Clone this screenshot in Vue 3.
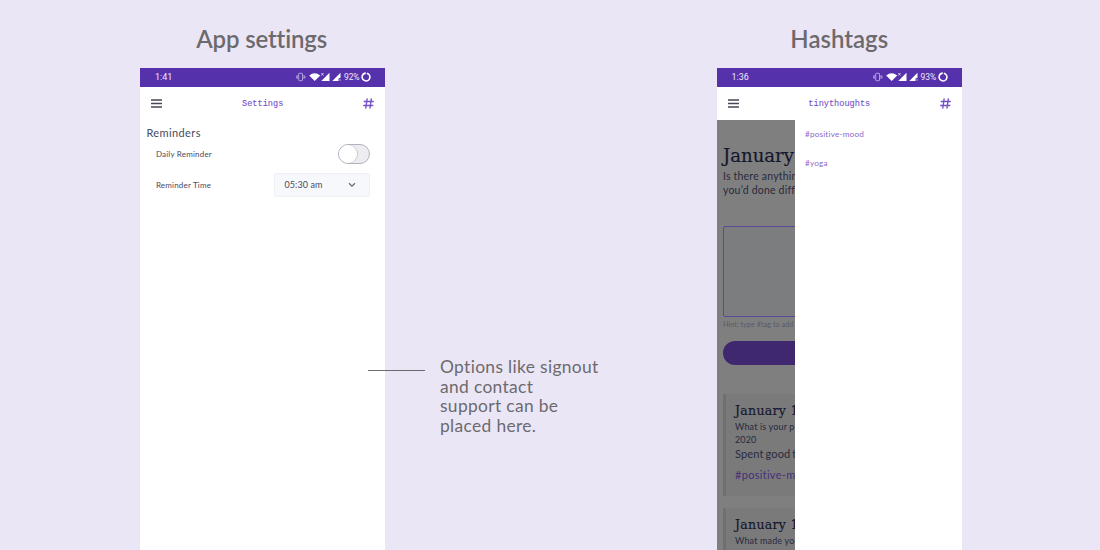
<script setup>
const phones = [
  { id: 'settings', heading: 'App settings', time: '1:41', battery: '92%', title: 'Settings' },
  { id: 'hashtags', heading: 'Hashtags', time: '1:36', battery: '93%', title: 'tinythoughts' },
]
</script>

<template>
  <main class="board">
    <section v-for="p in phones" :key="p.id" class="column" :class="p.id">
      <h1><span>{{ p.heading }}</span></h1>
      <div class="phone">
        <div class="status">
          <span class="clock">{{ p.time }}</span>
          <svg class="signals" width="46" height="10" viewBox="0 0 46 10">
            <g fill="none" stroke="#c9bcec" stroke-width=".8">
              <rect x="2.7" y="1.3" width="3.8" height="7.4" rx=".6" />
              <path d="M1.2 3v4M8 3v4M.2 4v2M9 4v2" />
            </g>
            <path fill="#fff" d="M13.200 3.400Q18.700-1 24.200 3.400L18.700 9Z" />
            <path fill="#fff" d="M33.500.8v8.200h-8.200Z" />
            <path d="m25.300 1 2.200 2.500m0-2.500-2.200 2.500" stroke="#fff" stroke-width=".7" />
            <path fill="#fff" d="M44.500.8v5l-2 .7v2.500h-6.200Z" />
            <path d="M44 7v2" stroke="#c9bcec" stroke-width=".8" />
          </svg>
          <span class="battery">{{ p.battery }}</span>
          <svg class="ring" width="10" height="10" viewBox="0 0 10 10">
            <circle cx="5" cy="5" r="3.900" fill="none" stroke="#fff" stroke-width="1.600" stroke-dasharray="22.800 1.700" transform="rotate(-78 5 5)" />
          </svg>
        </div>
        <div class="nav">
          <svg width="11" height="9" viewBox="0 0 11 9"><path d="M0 1h11M0 4.500h11M0 8h11" stroke="#474757" stroke-width="1.400" /></svg>
          <span class="title"><span>{{ p.title }}</span></span>
          <svg width="11" height="11" viewBox="0 0 11 11"><path d="M4.200.3 2.700 10.700M8.400.3 6.900 10.700M.7 3.500h10.100M.2 7.500h10.100" fill="none" stroke="#7551c8" stroke-width="1.350" /></svg>
        </div>

        <div v-if="p.id === 'settings'" class="prefs">
          <h2>Reminders</h2>
          <div class="pref daily"><span>Daily Reminder</span><i class="toggle"></i></div>
          <div class="pref timing">
            <span class="label">Reminder Time</span>
            <div class="select">
              <span>05:30 am</span>
              <svg width="8" height="6" viewBox="0 0 8 6"><path d="m1 1.200 3 2.900 3-2.900" fill="none" stroke="#676779" stroke-width="1.200" /></svg>
            </div>
          </div>
        </div>

        <div v-else class="split">
          <div class="journal">
            <h2>January</h2>
            <p class="question">Is there anythin<br>you’d done diff</p>
            <div class="entry"></div>
            <p class="hint">Hint: type #tag to add</p>
            <div class="submit"></div>
            <article>
              <h3>January 1</h3>
              <p class="prompt">What is your p<br>2020</p>
              <p class="answer">Spent good t</p>
              <p class="tag">#positive-m</p>
            </article>
            <article>
              <h3>January 1</h3>
              <p class="prompt">What made yo</p>
            </article>
          </div>
          <div class="drawer">
            <span>#positive-mood</span>
            <span class="yoga">#yoga</span>
          </div>
        </div>
      </div>
    </section>
    <aside>
      <i class="pointer"></i>
      <p>Options like signout<br>and contact<br>support can be<br>placed here.</p>
    </aside>
  </main>
</template>

<style>
body { margin: 0; overflow: hidden; }
</style>

<style scoped>
* { box-sizing: border-box; }
h1, h2, h3, p { margin: 0; font-weight: 400; white-space: nowrap; }
svg { flex: none; display: block; }
.board {
  position: relative; width: 1100px; height: 550px; overflow: hidden;
  display: flex; gap: 332px; padding-left: 140.400px;
  background: #ebe6f6; color: #4a4a5c; font-family: Lato, sans-serif; font-variant-ligatures: none;
}
.column { width: 244.600px; height: 550px; display: flex; flex-direction: column; }
h1 { height: 68.400px; padding-top: 24px; line-height: 30px; font-size: 24px; font-weight: 600; color: #6c6a6d; text-align: center; flex: none; }
.settings h1 { padding-right: 2px; letter-spacing: -.15px; }
.phone { flex: 1; min-height: 0; background: #fff; display: flex; flex-direction: column; }
.status { height: 18.200px; flex: none; background: #5631ac; color: #eee9fb; display: flex; align-items: center; padding: 0 13.500px 0 14.500px; font: 9px/18px Roboto, sans-serif; }
.clock { flex: 1; }
.signals { margin-right: 2px; }
.battery { width: 17.500px; font-size: 8.500px; letter-spacing: -.1px; }
.nav { height: 33.400px; flex: none; display: flex; align-items: center; padding: 0 11px; }
.title { flex: 1; padding-top: 2px; text-align: center; color: #7551c8; font: 8.600px/14px "Liberation Mono", monospace; -webkit-text-stroke: .1px #7551c8; }
.prefs { padding: 6.500px 15px 0 15.500px; }
.prefs h2 { margin-left: -9.500px; font-size: 11px; line-height: 14.500px; letter-spacing: .4px; }
.pref { display: flex; align-items: center; justify-content: space-between; font-size: 8px; letter-spacing: .2px; }
.daily { height: 27px; }
.timing { height: 24px; margin-top: 5px; }
.toggle { width: 32px; height: 20px; border: 1px solid #b2b2bf; border-radius: 10px; background: #ededf1; display: flex; }
.toggle::before { content: ""; width: 18px; height: 18px; border-radius: 50%; background: #fff; box-shadow: 1px 0 1px #c9c9d2; }
.select { width: 96px; height: 24px; display: flex; align-items: center; justify-content: space-between; padding: 0 13px 0 9.500px; background: #f7f8fc; border: 1px solid #eff0f5; border-radius: 2px; font-size: 9px; letter-spacing: .1px; }
.split { flex: 1; min-height: 0; display: flex; }
.journal { width: 78.500px; padding: 24px 0 0 6px; overflow: hidden; background: #7f7f80; color: #292a3c; }
.journal h2 { font: 18.100px/24px "DejaVu Serif", serif; color: #15162c; -webkit-text-stroke: .2px #15162c; }
.question { font-size: 10.500px; line-height: 14.500px; margin-top: 1px; letter-spacing: .2px; }
.entry { width: 120px; height: 91px; margin-top: 28px; border: 1px solid #5a4a96; border-radius: 2px; background: #7b7d7f; }
.hint { font-size: 7.200px; line-height: 10px; margin-top: 3px; letter-spacing: .05px; color: #5a5a64; }
.submit { width: 120px; height: 24px; margin-top: 11px; border-radius: 12px; background: #3f2870; }
article { width: 120px; height: 102px; margin-top: 29px; padding: 8px 0 0 9px; border-left: 3px solid #707071; background: #7a7a7b; }
article + article { margin-top: 12px; }
h3 { font: 12.500px/18px "DejaVu Serif", serif; letter-spacing: .3px; color: #15162c; -webkit-text-stroke: .15px #15162c; }
.prompt { font-size: 9px; line-height: 13px; letter-spacing: .15px; }
.answer { font-size: 11px; line-height: 16px; letter-spacing: .15px; word-spacing: -1px; }
.tag { font-size: 11px; line-height: 15px; margin-top: 5px; letter-spacing: .3px; color: #443078; }
.drawer { flex: 1; display: flex; flex-direction: column; padding: 7px 0 0 9.500px; color: #9068c9; font-size: 8.200px; letter-spacing: .18px; line-height: 14px; }
.yoga { margin-top: 15px; }
aside { position: absolute; left: 368px; top: 357px; display: flex; align-items: flex-start; gap: 15px; color: #6c6a6d; font-size: 17.400px; letter-spacing: .34px; line-height: 19.600px; }
.pointer { width: 57px; height: 1px; margin-top: 13px; background: #6b6b6d; }
</style>
